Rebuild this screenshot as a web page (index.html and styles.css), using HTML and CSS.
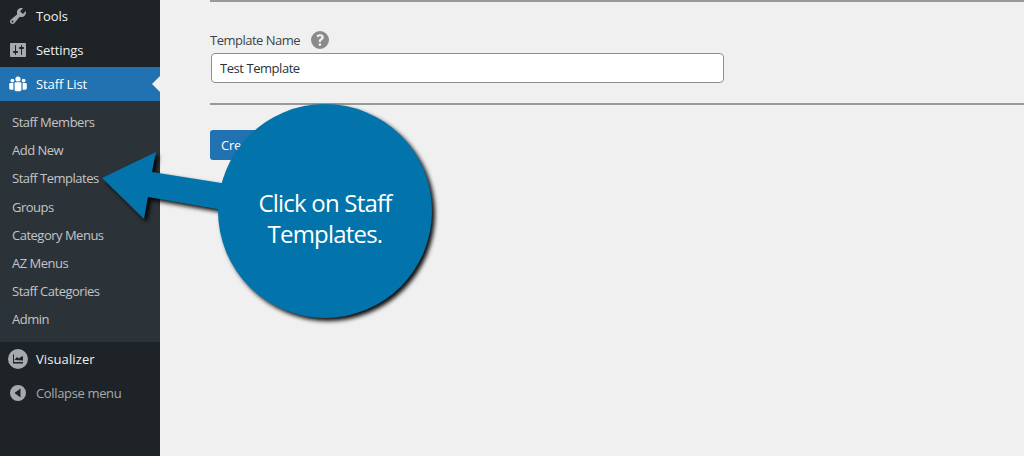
FILE: index.html
```html
<!DOCTYPE html>
<html lang="en">
<head>
<meta charset="utf-8">
<title>Staff Templates</title>
<link rel="stylesheet" href="styles.css">
</head>
<body>
<aside class="sidebar">
  <ul class="menu">
    <li class="item item-first">
      <svg class="icon" viewBox="0 0 20 20"><path d="M16.68 9.77c-1.34 1.34-3.3 1.67-4.95.99l-5.41 6.52c-.99.99-2.59.99-3.58 0s-.99-2.59 0-3.57l6.52-5.42c-.68-1.65-.35-3.61.99-4.95 1.28-1.28 3.12-1.62 4.72-1.06l-2.89 2.89 2.82 2.82 2.86-2.87c.53 1.58.18 3.39-1.08 4.65zM3.81 16.21c.4.39 1.04.39 1.43 0 .4-.4.4-1.04 0-1.43-.39-.4-1.03-.4-1.43 0-.39.39-.39 1.03 0 1.43z"/></svg>
      <span>Tools</span>
    </li>
    <li class="item">
      <svg class="icon" viewBox="0 0 20 20"><path d="M18 16V4c0-.55-.45-1-1-1H3c-.55 0-1 .45-1 1v12c0 .55.45 1 1 1h14c.55 0 1-.45 1-1zM8 11h1c.55 0 1 .45 1 1s-.45 1-1 1H8v1.5c0 .28-.22.5-.5.5s-.5-.22-.5-.5V13H6c-.55 0-1-.45-1-1s.45-1 1-1h1V5.5c0-.28.22-.5.5-.5s.5.22.5.5V11zm5-2h-1c-.55 0-1-.45-1-1s.45-1 1-1h1V5.5c0-.28.22-.5.5-.5s.5.22.5.5V7h1c.55 0 1 .45 1 1s-.45 1-1 1h-1v5.5c0 .28-.22.5-.5.5s-.5-.22-.5-.5V9z"/></svg>
      <span>Settings</span>
    </li>
    <li class="item item-current">
      <svg class="icon icon-white" viewBox="0 0 20 20"><circle cx="10" cy="5" r="2.6"/><circle cx="4.4" cy="6.6" r="1.9"/><circle cx="15.6" cy="6.6" r="1.9"/><path d="M6.6 9.2c0-.7.5-1 1-1h4.8c.5 0 1 .3 1 1v6.600c0 1-.7 1.400-1.400 1.400H8c-.7 0-1.400-.4-1.400-1.400z"/><path d="M1.200 10.200c0-.8.5-1.200 1.200-1.200h3v6.800H3C2 15.800 1.200 15 1.200 14z"/><path d="M18.800 10.200c0-.8-.5-1.200-1.200-1.200h-3v6.800H17c1 0 1.800-.8 1.800-1.800z"/></svg>
      <span>Staff List</span>
    </li>
    <li class="submenu">
      <a class="subitem">Staff Members</a>
      <a class="subitem">Add New</a>
      <a class="subitem">Staff Templates</a>
      <a class="subitem">Groups</a>
      <a class="subitem">Category Menus</a>
      <a class="subitem">AZ Menus</a>
      <a class="subitem">Staff Categories</a>
      <a class="subitem">Admin</a>
    </li>
    <li class="item">
      <svg class="icon" viewBox="0 0 20 20"><path fill-rule="evenodd" d="M10 0a10 10 0 1 0 0 20 10 10 0 0 0 0-20zM5 5.500h1v7.500h9v1.500H5zm1.500 5.500 2.500-3 2 1.500 3-2.500 1 1v3.500z"/></svg>
      <span class="wide">Visualizer</span>
    </li>
    <li class="item item-collapse">
      <svg class="icon" viewBox="0 0 20 20"><path fill-rule="evenodd" d="M10 2a8 8 0 1 0 0 16 8 8 0 0 0 0-16zm2.500 3.500v9L6.500 10z"/></svg>
      <span>Collapse menu</span>
    </li>
  </ul>
</aside>
<main class="content">
  <hr class="rule">
  <div class="field">
    <div class="label-row">
      <label class="label" for="template-name">Template Name</label>
      <svg class="help" viewBox="0 0 20 20"><path fill-rule="evenodd" d="M10 1a9 9 0 1 0 0 18 9 9 0 0 0 0-18zm.1 3.200c2.200 0 3.700 1.200 3.700 3 0 1.300-.7 2-1.700 2.700-.9.600-1.100.9-1.100 1.600v.4H8.800v-.6c0-1.200.4-1.800 1.400-2.500.8-.6 1.200-.9 1.200-1.500 0-.6-.5-1-1.300-1-.9 0-1.600.4-2.200 1.100L6.400 5.700c.9-1 2.200-1.500 3.700-1.500zM9.900 13.200a1.400 1.400 0 1 1 0 2.800 1.400 1.400 0 0 1 0-2.800z"/></svg>
    </div>
    <input class="input" id="template-name" type="text" value="Test Template">
  </div>
  <hr class="rule">
  <button class="button" type="button">Create Template</button>
</main>
<div class="callout">
  <svg class="callout-art" viewBox="0 0 1024 456">
    <g class="callout-shape">
      <path d="M102 178 156 152 152 172 240 186V213L148 197 144 219Z"/>
      <circle cx="325" cy="211" r="107"/>
    </g>
  </svg>
  <p class="callout-text">Click on Staff Templates.</p>
</div>
</body>
</html>
```
FILE: styles.css
```css
* { box-sizing: border-box; }

html, body {
  margin: 0;
  height: 456px;
  overflow: hidden;
}

body {
  display: flex;
  background: #f0f0f1;
  font-family: "Open Sans", "Liberation Sans", sans-serif;
  font-size: 13px;
  color: #2c3338;
}

.sidebar {
  flex: 0 0 160px;
  background: #1d2327;
}

.menu {
  list-style: none;
  margin: 0;
  padding: 0;
}

.item {
  display: flex;
  align-items: center;
  gap: 8px;
  height: 34px;
  padding-left: 8px;
  color: #f0f0f1;
  letter-spacing: -0.1px;
}

.item-first {
  height: 33px;
  padding-bottom: 1px;
}

.wide { letter-spacing: 0.1px; }

.icon {
  flex: 0 0 20px;
  width: 20px;
  height: 20px;
  fill: #a7aaad;
}

.icon-white { fill: #fff; }

.item-current {
  position: relative;
  background: #2271b1;
  color: #fff;
}

.item-current::after {
  content: "";
  position: absolute;
  right: 0;
  top: 50%;
  margin-top: -8px;
  border: 8px solid transparent;
  border-left-width: 0;
  border-right-color: #f0f0f1;
}

.item-collapse {
  color: #a7aaad;
  letter-spacing: -0.35px;
}

.submenu {
  display: flex;
  flex-direction: column;
  padding: 7px 0 8px;
  background: #2c3338;
}

.subitem {
  display: flex;
  align-items: center;
  height: 28.2px;
  padding-left: 12px;
  color: #c3c4c7;
  letter-spacing: -0.5px;
}

.content {
  flex: 1;
  padding: 0 0 0 50px;
}

.rule {
  height: 2px;
  margin: 0;
  border: 0;
  background: #999;
}

.field {
  display: flex;
  flex-direction: column;
  padding: 28px 0 20px 1px;
  height: 101px;
}

.label-row {
  display: flex;
  align-items: center;
  gap: 10px;
  height: 19px;
  margin-left: -1px;
}

.label {
  letter-spacing: -0.5px;
  color: #3c434a;
}

.help {
  width: 20px;
  height: 20px;
  fill: #8a8a8a;
}

.input {
  width: 513px;
  height: 30px;
  margin-top: 4px;
  padding: 0 8px;
  border: 1px solid #8c8f94;
  border-radius: 4px;
  background: #fff;
  font: inherit;
  letter-spacing: -0.45px;
  color: #2c3338;
}

.button {
  display: block;
  width: 110px;
  height: 30px;
  margin-top: 25px;
  padding: 0 0 0 11px;
  border: 0;
  border-radius: 3px;
  background: #2271b1;
  color: #fff;
  font: inherit;
  letter-spacing: -0.3px;
  text-align: left;
}

.callout {
  position: absolute;
  inset: 0;
}

.callout-art {
  display: block;
  width: 1024px;
  height: 456px;
}

.callout-shape {
  fill: #0274ab;
  filter: drop-shadow(3px 3px 2px rgba(0, 0, 0, 0.95));
}

.callout-text {
  position: absolute;
  left: 235px;
  top: 187px;
  width: 180px;
  margin: 0;
  color: #fff;
  font-size: 24px;
  line-height: 31px;
  letter-spacing: -0.8px;
  text-align: center;
}
```
